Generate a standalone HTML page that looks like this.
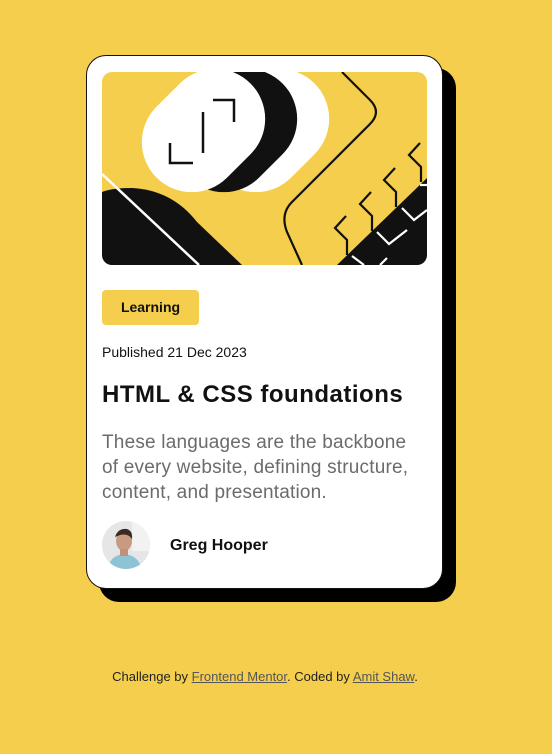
<!DOCTYPE html>
<html><head><meta charset="utf-8"><style>
*{margin:0;padding:0;box-sizing:border-box}
body{width:552px;height:754px;background:#f4ce4c;font-family:"Liberation Sans",sans-serif;position:relative;overflow:hidden}
.card{position:absolute;left:86px;top:55px;width:357px;height:534px;background:#fff;border:1px solid #111;border-radius:20px;box-shadow:13px 13px 0 #000}
.img{position:absolute;left:15px;top:16px;width:325px;height:193px;border-radius:10px;overflow:hidden;background:#f4ce4c}
.tag{position:absolute;left:15px;top:234px;width:97px;height:35px;background:#f4ce4c;border-radius:4px;font-weight:bold;font-size:14px;line-height:35px;text-align:center;color:#111}
.pub{position:absolute;left:15px;top:288px;font-size:14px;color:#111}
h1{position:absolute;left:15px;top:325px;font-size:24px;letter-spacing:0.5px;font-weight:bold;color:#111;white-space:nowrap}
.desc{position:absolute;left:15px;top:374px;width:340px;font-size:19px;letter-spacing:0.2px;line-height:25px;color:#6b6b6b;white-space:nowrap}
.av{position:absolute;left:15px;top:465px;width:48px;height:48px;border-radius:50%;overflow:hidden;background:#e8eaec}
.name{position:absolute;left:83px;top:481px;font-size:16px;font-weight:bold;color:#111}
.foot{position:absolute;top:669px;left:0;width:530px;text-align:center;font-size:13px;color:#222}
.foot a{color:#555;text-decoration:underline}
</style></head><body>
<div class="card">
<div class="img"><svg width="325" height="193" viewBox="0 0 325 193">
<g transform="rotate(-45 165.5 58.5)"><rect x="99" y="8.5" width="133" height="100" rx="50" fill="#fff"/></g>
<g transform="rotate(-45 133.5 58.5)"><rect x="67" y="8.5" width="133" height="100" rx="50" fill="#111"/></g>
<g transform="rotate(-45 101.5 58.5)"><rect x="35" y="8.5" width="133" height="100" rx="50" fill="#fff"/></g>
<path d="M68 71 V91 H91" stroke="#111" stroke-width="2.5" fill="none"/>
<path d="M101 40 V81" stroke="#111" stroke-width="2.5" fill="none"/>
<path d="M111 28 H132 V50" stroke="#111" stroke-width="2.5" fill="none"/>
<path d="M0 120 Q10 116 30 116 Q70 118 95 150 L140 193 H0 Z" fill="#111"/>
<path d="M0 102 L97 193" stroke="#fff" stroke-width="2.5"/>
<path d="M240 0 L268 28 Q280 40 268 52 L190 130 Q178 142 185 160 L200 193" stroke="#111" stroke-width="2.2" fill="none"/>
<path d="M235 193 L325 106 V193 Z" fill="#111"/>
<g stroke="#111" stroke-width="2.2" fill="none">
<path d="M318 71 L307 83 L319 95 V110"/><path d="M293 96 L282 108 L294 120 V135"/><path d="M269 120 L258 132 L270 144 V159"/><path d="M244 144 L233 156 L245 168 V183"/>
</g>
<g stroke="#fff" stroke-width="2.2" fill="none">
<path d="M325 113 L318 113"/><path d="M300 136 L312 148 L325 138"/><path d="M275 160 L287 172 L305 158"/><path d="M250 184 L262 193"/><path d="M278 193 L285 186"/>
</g>
</svg></div>
<div class="tag">Learning</div>
<div class="pub">Published 21 Dec 2023</div>
<h1>HTML &amp; CSS foundations</h1>
<div class="desc">These languages are the backbone<br>of every website, defining structure,<br>content, and presentation.</div>
<div class="av"><svg width="48" height="48"><rect width="48" height="48" fill="#e4e6e8"/><rect x="30" width="18" height="30" fill="#f2f2f2"/><path d="M6 48 Q8 34 22 33 Q36 34 40 48Z" fill="#8ec3d6"/><ellipse cx="22" cy="20" rx="8" ry="10" fill="#c99a82"/><path d="M13 16 Q16 7 25 8 Q31 10 30 18 Q26 12 18 14Z" fill="#3a2a22"/><rect x="18" y="28" width="8" height="7" fill="#c0907a"/></svg></div>
<div class="name">Greg Hooper</div>
</div>
<div class="foot">Challenge by <a>Frontend Mentor</a>. Coded by <a>Amit Shaw</a>.</div>
</body></html>
